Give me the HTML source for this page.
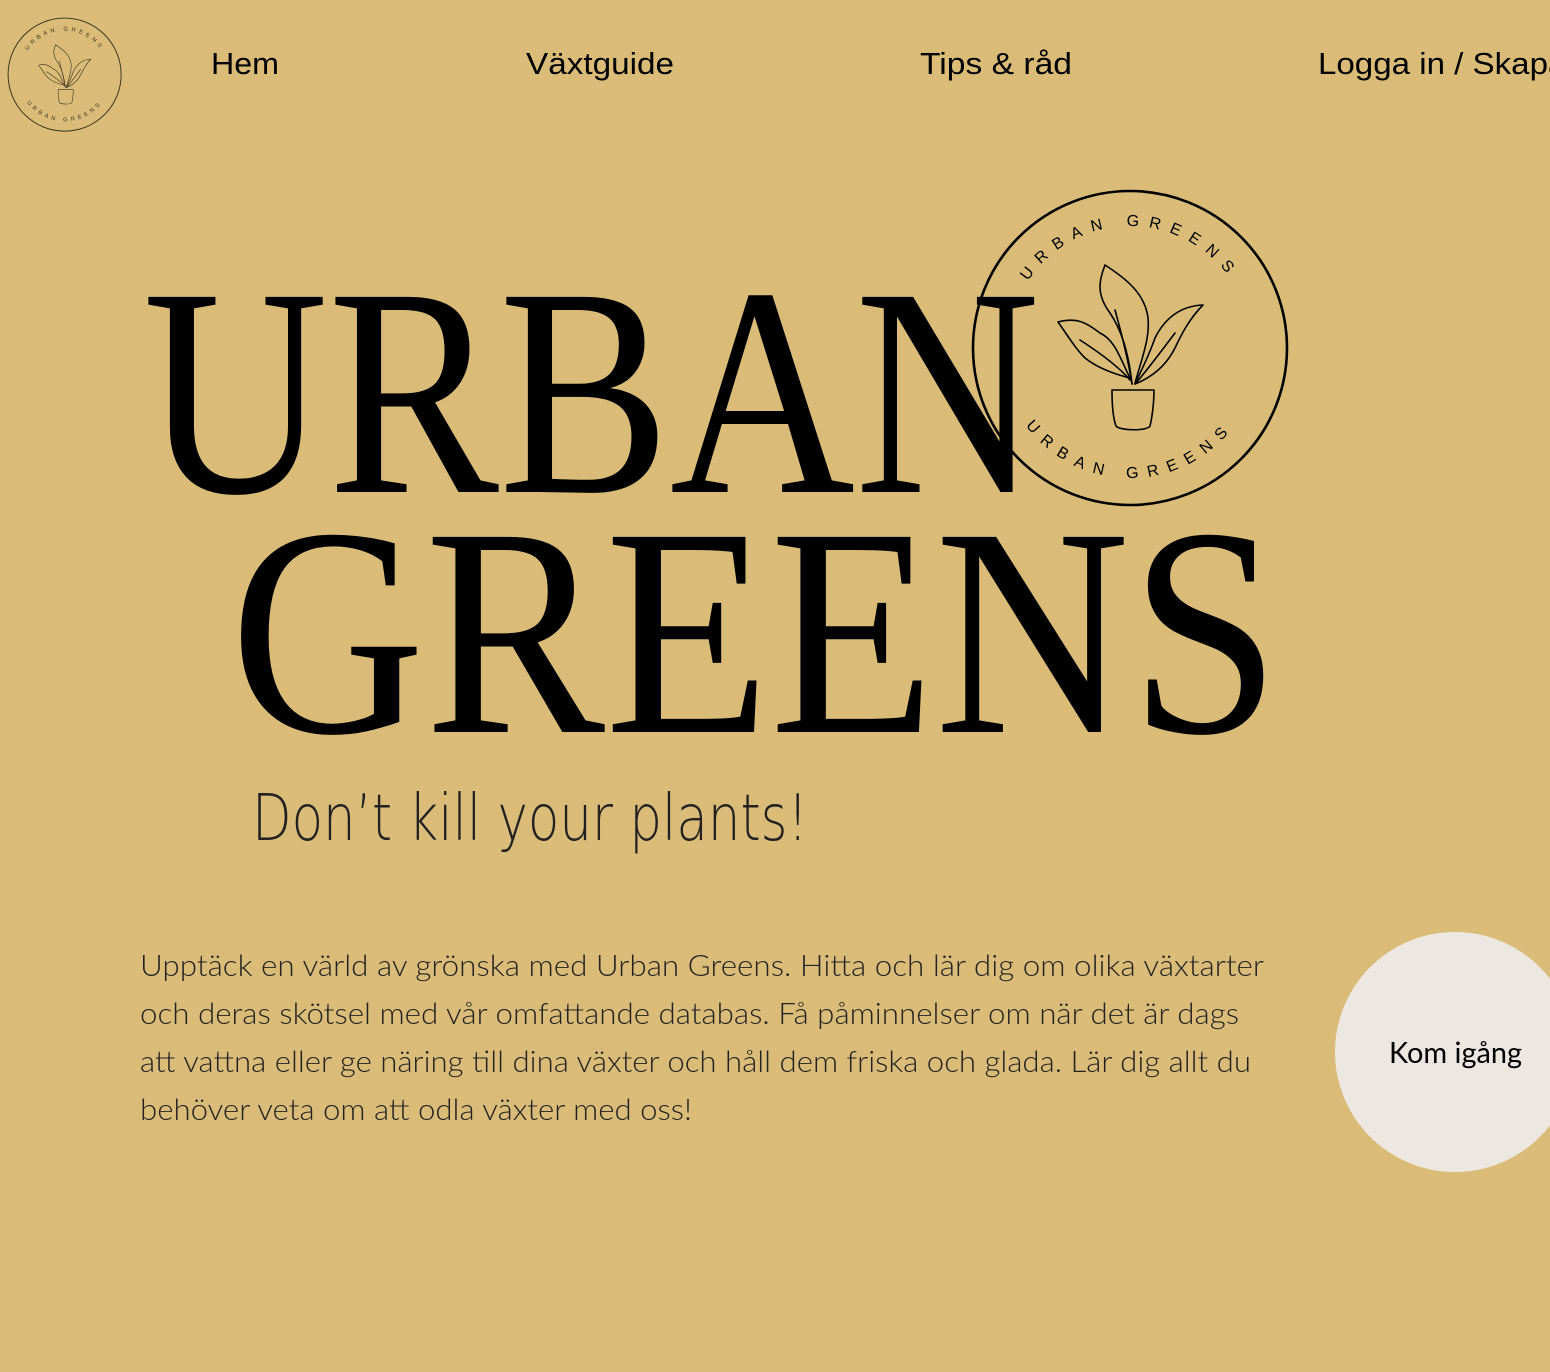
<!DOCTYPE html>
<html><head><meta charset="utf-8"><style>
html,body{margin:0;padding:0;background:#DABB77;width:1550px;height:1372px;overflow:hidden}
svg{display:block}
</style></head><body>
<svg width="1550" height="1372" viewBox="0 0 1550 1372" xmlns="http://www.w3.org/2000/svg">
<defs>
<g id="logo">
  <circle cx="160" cy="160" r="157" fill="none" stroke="#000" stroke-width="2.6"/>
  <path id="topArc" d="M38,160 A122,122 0 0 1 282,160" fill="none"/>
  <path id="botArc" d="M30,160 A130,130 0 0 0 290,160" fill="none"/>
  <text font-family="Liberation Sans, sans-serif" font-size="16" letter-spacing="9.5" fill="#000"><textPath href="#topArc" startOffset="50%" text-anchor="middle">URBAN GREENS</textPath></text>
  <text font-family="Liberation Sans, sans-serif" font-size="16" letter-spacing="9.5" fill="#000"><textPath href="#botArc" startOffset="50%" text-anchor="middle">URBAN GREENS</textPath></text>
  <g fill="none" stroke="#000" stroke-width="1.6" stroke-linecap="round" stroke-linejoin="round">
    <path d="M162,196 C158,160 150,140 140,125 C125,105 130,90 135,77 C155,90 175,105 178,130 C180,150 172,170 165,195"/>
    <path d="M145,122 C150,140 158,170 162,196"/>
    <path d="M88,134 C110,128 120,138 130,145 C145,152 150,170 160,190 C140,185 125,178 115,170 C105,160 98,148 88,134 Z"/>
    <path d="M110,152 C130,165 150,180 160,192"/>
    <path d="M233,117 C210,118 195,130 185,150 C178,170 170,185 165,196 C180,190 195,180 205,160 C212,145 220,130 233,117 Z"/>
    <path d="M205,145 C190,165 175,185 165,196"/>
    <path d="M142,202 L184,202 C184,215 182,230 180,238 C178,243 150,243 146,238 C143,230 142,215 142,202 Z"/>
  </g>
</g>
</defs>

<g transform="translate(7,17) scale(0.36)" opacity="0.75"><use href="#logo"/></g>

<g font-family="Liberation Sans, sans-serif" font-size="31" fill="#000">
  <text x="211" y="74" textLength="68" lengthAdjust="spacingAndGlyphs">Hem</text>
  <text x="526" y="74" textLength="148" lengthAdjust="spacingAndGlyphs">Växtguide</text>
  <text x="920" y="74" textLength="152" lengthAdjust="spacingAndGlyphs">Tips &amp; råd</text>
  <text x="1318" y="74" textLength="230" lengthAdjust="spacingAndGlyphs">Logga in / Skap</text>
  <text x="1548" y="74">a konto</text>
</g>

<text x="143" y="492" font-family="Liberation Serif, serif" font-size="298" fill="#000" textLength="897" lengthAdjust="spacingAndGlyphs">URBAN</text>
<text x="230" y="732" font-family="Liberation Serif, serif" font-size="298" fill="#000" textLength="1050" lengthAdjust="spacingAndGlyphs">GREENS</text>

<g transform="translate(970,188)"><use href="#logo"/></g>

<text x="252" y="840" font-family="DejaVu Sans, sans-serif" font-weight="200" font-size="64" fill="#222" textLength="556" lengthAdjust="spacingAndGlyphs">Don’t kill your plants!</text>

<g font-family="Lato, Liberation Sans, sans-serif" font-weight="300" font-size="30" fill="#222">
  <text x="140" y="976" textLength="1124" lengthAdjust="spacingAndGlyphs">Upptäck en värld av grönska med Urban Greens. Hitta och lär dig om olika växtarter</text>
  <text x="140" y="1024" textLength="1099" lengthAdjust="spacingAndGlyphs">och deras skötsel med vår omfattande databas. Få påminnelser om när det är dags</text>
  <text x="140" y="1072" textLength="1111" lengthAdjust="spacingAndGlyphs">att vattna eller ge näring till dina växter och håll dem friska och glada. Lär dig allt du</text>
  <text x="140" y="1120" textLength="552" lengthAdjust="spacingAndGlyphs">behöver veta om att odla växter med oss!</text>
</g>

<circle cx="1455" cy="1052" r="120" fill="#EDE7E1"/>
<text x="1389" y="1063" font-family="Lato, Liberation Sans, sans-serif" font-size="29" fill="#000" textLength="133" lengthAdjust="spacingAndGlyphs">Kom igång</text>
</svg>
</body></html>
